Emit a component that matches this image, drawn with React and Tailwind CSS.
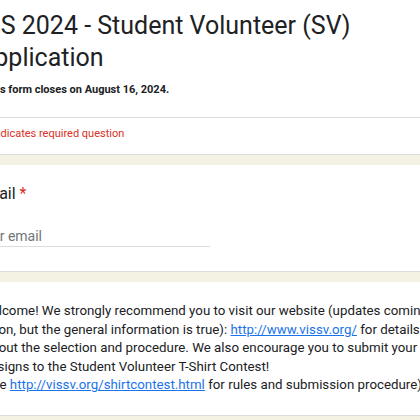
export default function App() {
  return (
    <div className="h-[420px] w-[420px] overflow-hidden bg-[#f3f2e3] font-['Roboto',sans-serif] text-[#202124]">
      <div className="-ml-[48px] flex w-[560px] flex-col gap-[10px]">
        {/* Header card */}
        <div className="rounded-b-lg border-b border-[#dadce0] bg-white">
          <div className="px-6 pt-[10px] pb-[19px]">
            <h1 className="text-[25px] leading-[32px] font-normal whitespace-nowrap">
              <div className="ml-[2px]">VIS 2024 - Student Volunteer (SV)</div>
              <div className="ml-[2px]">Application</div>
            </h1>
            <p className="mt-[8px] ml-[8px] text-[11px] leading-4 font-bold whitespace-nowrap">
              This form closes on August 16, 2024.
            </p>
          </div>
          <div className="border-t border-[#dadce0] px-6 pt-[8px] pb-[12px]">
            <p className="ml-[8px] text-[11px] leading-4 text-[#d93025] whitespace-nowrap">
              * Indicates required question
            </p>
          </div>
        </div>

        {/* Email question */}
        <div className="rounded-lg border-b border-[#dadce0] bg-white px-6 pt-[17px] pb-[24px]">
          <div className="text-[16px] leading-6 whitespace-nowrap">
            Email <span className="text-[#d93025]">*</span>
          </div>
          <div className="mt-[20px] w-[234px] border-b border-[#dadce0] text-[14px] leading-5 text-[#70757a]">
            Your email
          </div>
        </div>

        {/* Description */}
        <div className="rounded-lg border-b border-[#dadce0] bg-white py-[20px] pr-6 pl-[28px] text-[13.3px] leading-[18.6px] whitespace-nowrap">
          <div>
            Welcome! We strongly recommend you to visit our website (updates coming
          </div>
          <div className="ml-[4px]">
            soon, but the general information is true):{' '}
            <a href="#" className="text-[#1a73e8] underline">http://www.vissv.org/</a> for details
          </div>
          <div className="ml-[4px]">about the selection and procedure. We also encourage you to submit your</div>
          <div className="ml-[3px]">designs to the Student Volunteer T-Shirt Contest!</div>
          <div>
            (See <a href="#" className="text-[#1a73e8] underline">http://vissv.org/shirtcontest.html</a> for rules and submission procedure)
          </div>
        </div>
      </div>
    </div>
  );
}
